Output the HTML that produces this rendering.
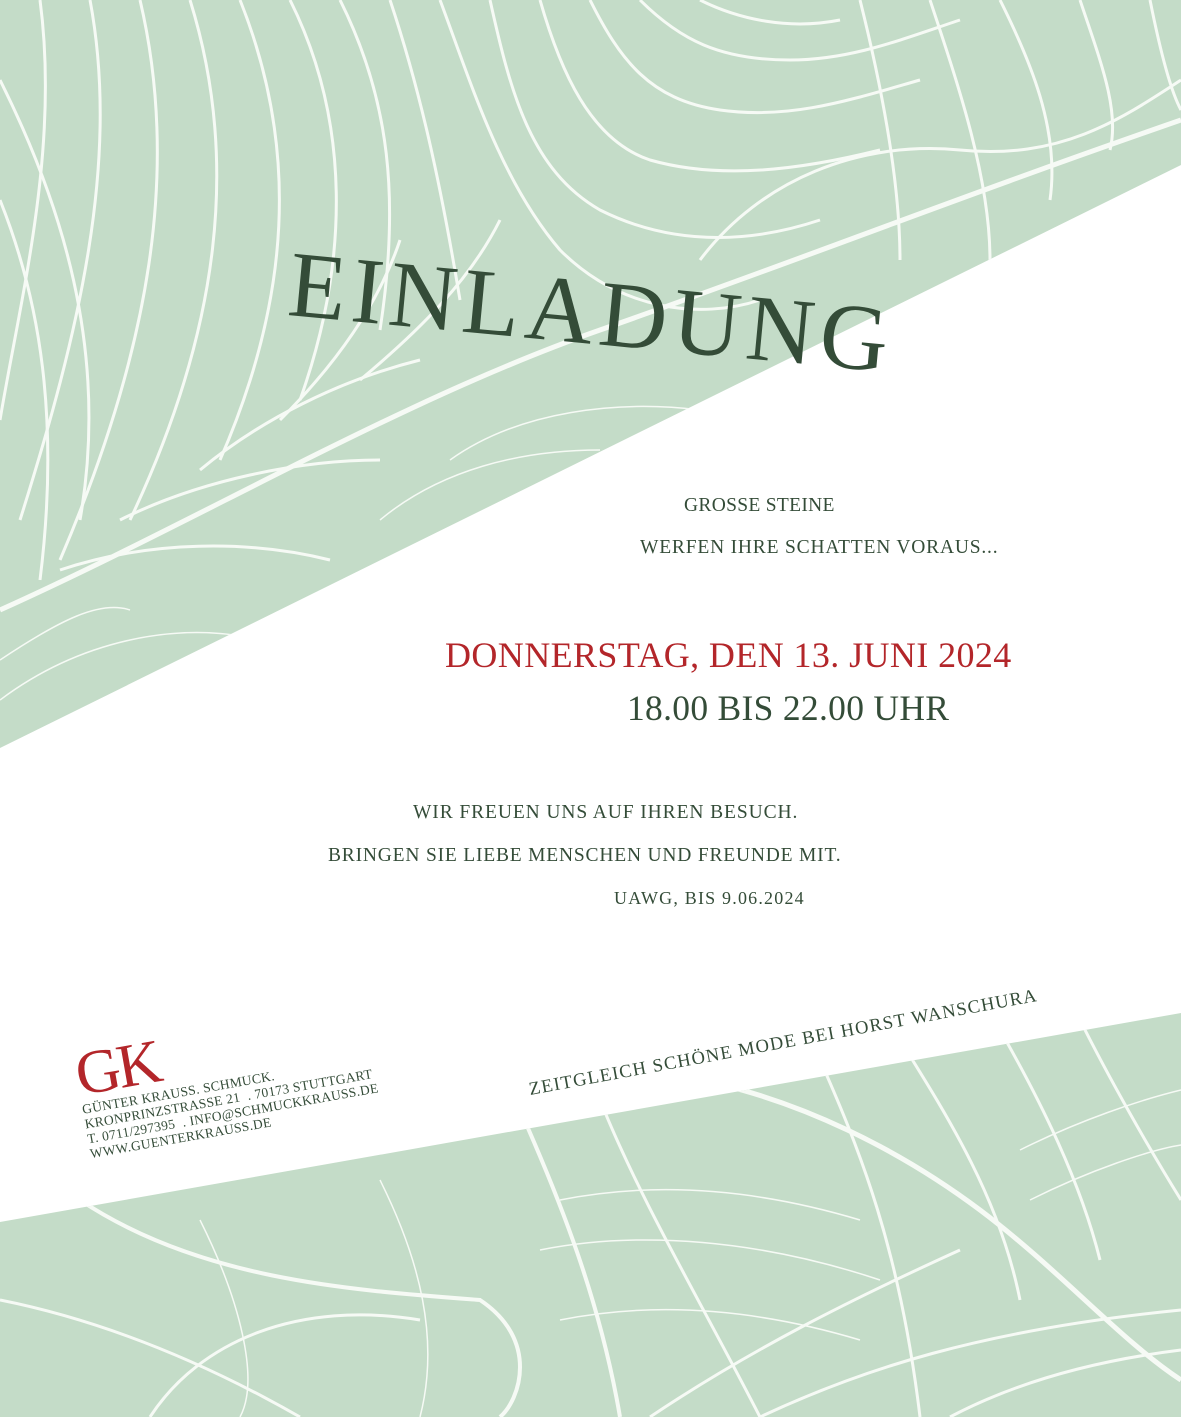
<!DOCTYPE html>
<html><head><meta charset="utf-8"><style>
html,body{margin:0;padding:0;}
body{width:1181px;height:1417px;position:relative;overflow:hidden;background:#fff;font-family:"Liberation Serif",serif;color:#344c38;}
.t{position:absolute;white-space:nowrap;}
</style></head><body>
<svg width="1181" height="1417" style="position:absolute;left:0;top:0">
<defs>
<clipPath id="top"><polygon points="0,0 1181,0 1181,165 0,748"/></clipPath>
<clipPath id="bot"><polygon points="0,1222 1181,1013 1181,1417 0,1417"/></clipPath>
</defs>
<polygon points="0,0 1181,0 1181,165 0,748" fill="#c4dcc8"/>
<polygon points="0,1222 1181,1013 1181,1417 0,1417" fill="#c4dcc8"/>
<g clip-path="url(#top)" fill="none" stroke="#f6faf5" stroke-width="3">
<path d="M0,610 C200,520 400,400 600,330 C800,260 950,200 1181,120" stroke-width="5"/>
<path d="M40,0 C60,150 20,300 0,420"/>
<path d="M90,0 C120,160 80,330 20,520"/>
<path d="M140,0 C180,170 150,350 60,560"/>
<path d="M190,0 C240,160 220,330 130,520"/>
<path d="M240,0 C300,150 290,300 220,460"/>
<path d="M290,0 C350,120 350,260 300,400"/>
<path d="M340,0 C390,100 400,200 380,330"/>
<path d="M390,0 C420,90 440,180 460,300"/>
<path d="M440,0 C470,80 500,180 560,250 C620,310 700,320 760,300"/>
<path d="M490,0 C510,90 530,170 600,210 C680,250 760,240 820,220"/>
<path d="M540,0 C560,70 590,140 650,160 C720,180 800,170 880,150"/>
<path d="M590,0 C620,60 650,100 720,110 C790,120 850,100 920,80"/>
<path d="M640,0 C680,40 720,60 790,60 C850,60 900,40 960,20"/>
<path d="M700,0 C740,20 790,30 840,20"/>
<path d="M0,80 C60,200 110,350 80,520"/>
<path d="M0,200 C40,300 60,420 40,580"/>
<path d="M860,0 C880,80 900,180 900,260"/>
<path d="M930,0 C960,90 990,180 990,260"/>
<path d="M1000,0 C1030,60 1060,130 1050,200"/>
<path d="M1080,0 C1100,60 1120,110 1110,150"/>
<path d="M1150,0 C1160,50 1170,90 1181,110"/>
<path d="M700,260 C760,180 860,140 960,150 C1060,160 1120,120 1181,80"/>
<path d="M200,470 C260,420 340,380 420,360"/>
<path d="M120,520 C200,480 300,460 380,460"/>
<path d="M60,570 C150,540 250,540 330,560"/>
<path d="M280,420 C340,360 380,300 400,240"/>
<path d="M360,380 C420,330 470,280 500,220"/>
<path d="M0,700 C80,640 180,620 260,640" stroke-width="1.5"/>
<path d="M0,660 C60,620 100,600 130,610" stroke-width="1.5"/>
<path d="M380,520 C440,470 520,450 600,450" stroke-width="1.5"/>
<path d="M450,460 C520,410 620,400 700,410" stroke-width="1.5"/>
</g>
<g clip-path="url(#bot)" fill="none" stroke="#f6faf5" stroke-width="3">
<path d="M80,1200 C200,1280 350,1290 480,1300 C540,1340 520,1400 500,1417" stroke-width="4"/>
<path d="M0,1300 C100,1320 200,1360 300,1417"/>
<path d="M150,1417 C200,1340 300,1300 420,1320"/>
<path d="M520,1110 C560,1200 600,1300 620,1417" stroke-width="4"/>
<path d="M600,1100 C640,1200 700,1300 760,1417"/>
<path d="M700,1080 C800,1100 900,1150 980,1210 C1060,1270 1120,1340 1181,1380" stroke-width="5"/>
<path d="M820,1060 C860,1150 900,1250 920,1417"/>
<path d="M900,1040 C950,1120 1000,1200 1020,1300"/>
<path d="M1000,1030 C1040,1100 1080,1180 1100,1260"/>
<path d="M1080,1020 C1110,1080 1150,1150 1181,1200"/>
<path d="M650,1417 C750,1350 850,1300 960,1250"/>
<path d="M760,1417 C860,1370 980,1330 1181,1310"/>
<path d="M950,1417 C1020,1380 1100,1360 1181,1350"/>
<path d="M560,1200 C660,1180 760,1190 860,1220" stroke-width="1.5"/>
<path d="M540,1250 C640,1230 760,1240 880,1280" stroke-width="1.5"/>
<path d="M560,1320 C660,1300 760,1310 860,1340" stroke-width="1.5"/>
<path d="M1020,1150 C1080,1120 1140,1100 1181,1090" stroke-width="1.5"/>
<path d="M1030,1200 C1090,1170 1150,1150 1181,1145" stroke-width="1.5"/>
<path d="M200,1220 C240,1300 260,1380 240,1417" stroke-width="1.5"/>
<path d="M380,1180 C420,1260 440,1340 420,1417" stroke-width="1.5"/>
</g>
</svg>
<div class="t" style="left:288px;top:230px;font-size:94px;letter-spacing:6px;transform:rotate(5.4deg);transform-origin:0 66px;">EINLADUNG</div>
<div class="t" style="left:684px;top:495px;font-size:19.5px;letter-spacing:0.3px;">GROSSE STEINE</div>
<div class="t" style="left:640px;top:537px;font-size:19.5px;letter-spacing:0.8px;">WERFEN IHRE SCHATTEN VORAUS...</div>
<div class="t" style="left:445px;top:634px;font-size:36px;letter-spacing:0.4px;color:#b3262a;">DONNERSTAG, DEN 13. JUNI 2024</div>
<div class="t" style="left:627px;top:687px;font-size:35.5px;letter-spacing:0.3px;">18.00 BIS 22.00 UHR</div>
<div class="t" style="left:413px;top:802px;font-size:19.5px;letter-spacing:0.9px;">WIR FREUEN UNS AUF IHREN BESUCH.</div>
<div class="t" style="left:328px;top:845px;font-size:19.5px;letter-spacing:0.8px;">BRINGEN SIE LIEBE MENSCHEN UND FREUNDE MIT.</div>
<div class="t" style="left:614px;top:888px;font-size:18px;letter-spacing:1.2px;">UAWG, BIS 9.06.2024</div>
<div class="t" style="left:530px;top:1080px;font-size:18.5px;letter-spacing:1.2px;transform:rotate(-10.5deg);transform-origin:0 14px;">ZEITGLEICH SCHÖNE MODE BEI HORST WANSCHURA</div>
<div class="t" style="left:82px;top:1048px;transform:rotate(-10deg);transform-origin:0 60px;">
<div style="font-size:62px;color:#b3262a;line-height:54px;letter-spacing:-3px;">GK</div>
<div style="font-size:13.5px;line-height:15px;letter-spacing:0.3px;">GÜNTER KRAUSS. SCHMUCK.<br>KRONPRINZSTRASSE 21 &nbsp;. 70173 STUTTGART<br>T. 0711/297395 &nbsp;. INFO@SCHMUCKKRAUSS.DE<br>WWW.GUENTERKRAUSS.DE</div>
</div>
</body></html>
